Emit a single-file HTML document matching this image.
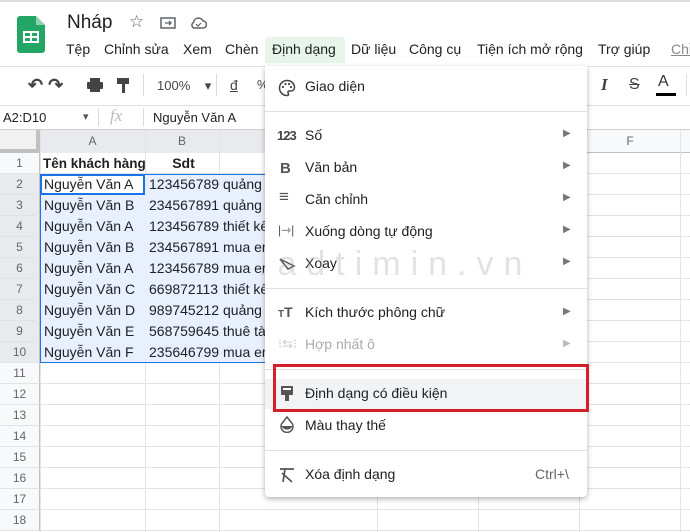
<!DOCTYPE html>
<html><head><meta charset="utf-8"><style>
*{margin:0;padding:0;box-sizing:border-box}
body{width:690px;height:532px;overflow:hidden;background:#fff;font-family:"Liberation Sans",Arial,sans-serif;position:relative;color:#202124}
.a{position:absolute;white-space:nowrap}
.menu span{position:absolute}
.hl{position:absolute;left:0;height:21px;width:40px;background:#f8f9fa;border-bottom:1px solid #e2e3e3;border-right:1px solid #c0c0c0;font-size:12px;color:#666;text-align:center;line-height:21px}
.cell{position:absolute;height:21px;font-size:14px;line-height:21px;padding-left:3px}
</style></head><body>
<div class="a" style="left:0;top:0;width:690px;height:2px;background:#ddd"></div>
<svg class="a" style="left:17px;top:16px" width="28" height="37" viewBox="0 0 28 37"><path d="M3 0H19L28 9V34a3 3 0 0 1-3 3H3a3 3 0 0 1-3-3V3a3 3 0 0 1 3-3z" fill="#23a566"/><path d="M19 0V9H28z" fill="#8ed1b1"/><rect x="6" y="15" width="16" height="12" fill="#fff"/><rect x="8" y="17" width="5" height="3" fill="#23a566"/><rect x="15" y="17" width="5" height="3" fill="#23a566"/><rect x="8" y="22" width="5" height="3" fill="#23a566"/><rect x="15" y="22" width="5" height="3" fill="#23a566"/></svg>
<div class="a" style="left:67px;top:12px;font-size:19px;color:#202124">Nháp</div>
<div class="a" style="left:129px;top:12px;font-size:17px;color:#5f6368">☆</div>
<svg class="a" style="left:160px;top:16px" width="16" height="13"><rect x="1" y="2" width="14" height="10" fill="none" stroke="#5f6368" stroke-width="1.5"/><path d="M5 7h6M9 5l2 2-2 2" stroke="#5f6368" fill="none" stroke-width="1.3"/></svg>
<svg class="a" style="left:189px;top:16px" width="18" height="13"><path d="M5 12h9a3.5 3.5 0 0 0 0-7 5 5 0 0 0-9.5 1.5A3 3 0 0 0 5 12z" fill="none" stroke="#5f6368" stroke-width="1.5"/><path d="M7 8l2 2 3-3" stroke="#5f6368" fill="none" stroke-width="1.2"/></svg>
<div class="a" style="top:41px;font-size:14px;color:#202124;left:66px">Tệp</div>
<div class="a" style="top:41px;font-size:14px;left:104px">Chỉnh sửa</div>
<div class="a" style="top:41px;font-size:14px;left:183px">Xem</div>
<div class="a" style="top:37px;left:265px;width:80px;height:26px;background:#e6f4ea;border-radius:4px 4px 0 0"></div>
<div class="a" style="top:41px;font-size:14px;left:225px">Chèn</div>
<div class="a" style="top:41px;font-size:14px;left:272px">Định dạng</div>
<div class="a" style="top:41px;font-size:14px;left:351px">Dữ liệu</div>
<div class="a" style="top:41px;font-size:14px;left:409px">Công cụ</div>
<div class="a" style="top:41px;font-size:14px;left:477px">Tiện ích mở rộng</div>
<div class="a" style="top:41px;font-size:14px;left:598px">Trợ giúp</div>
<div class="a" style="top:41px;font-size:14px;left:671px;color:#888;text-decoration:underline">Chỉ</div>
<div class="a" style="left:0;top:66px;width:690px;height:1px;background:#e0e0e0"></div>
<div class="a" style="left:28px;top:75px;font-size:18px;color:#444;font-weight:bold">↶ ↷</div>
<svg class="a" style="left:86px;top:77px" width="18" height="16"><rect x="4" y="1" width="10" height="4" fill="#444"/><rect x="1" y="5" width="16" height="7" rx="1" fill="#444"/><rect x="4" y="10" width="10" height="5" fill="#444"/></svg>
<svg class="a" style="left:116px;top:77px" width="14" height="17"><rect x="1" y="1" width="12" height="6" fill="#444"/><rect x="6" y="7" width="3" height="9" fill="#444"/></svg>
<div class="a" style="left:143px;top:74px;width:1px;height:22px;background:#ddd"></div>
<div class="a" style="left:157px;top:78px;font-size:13px;color:#444">100%&nbsp;&nbsp;&nbsp;&nbsp;▾</div>
<div class="a" style="left:216px;top:74px;width:1px;height:22px;background:#ddd"></div>
<div class="a" style="left:230px;top:77px;font-size:14px;color:#444;text-decoration:underline">đ</div>
<div class="a" style="left:257px;top:77px;font-size:13px;color:#444">%</div>
<div class="a" style="left:601px;top:75px;font-size:17px;color:#444;font-style:italic;font-family:'Liberation Serif',serif;font-weight:bold">I</div>
<div class="a" style="left:629px;top:76px;font-size:16px;color:#444;text-decoration:line-through">S</div>
<div class="a" style="left:658px;top:73px;font-size:16px;color:#333">A</div>
<div class="a" style="left:656px;top:93px;width:20px;height:3px;background:#000"></div>
<div class="a" style="left:686px;top:74px;width:1px;height:22px;background:#ddd"></div>
<div class="a" style="left:0;top:105px;width:690px;height:1px;background:#e0e0e0"></div>
<div class="a" style="left:3px;top:110px;font-size:13px">A2:D10</div>
<div class="a" style="left:83px;top:110px;font-size:11px;color:#555">▾</div>
<div class="a" style="left:98px;top:108px;width:1px;height:18px;background:#ddd"></div>
<div class="a" style="left:110px;top:106px;font-size:17px;color:#bbb;font-style:italic;font-family:'Liberation Serif',serif">fx</div>
<div class="a" style="left:143px;top:108px;width:1px;height:18px;background:#ddd"></div>
<div class="a" style="left:153px;top:110px;font-size:13px">Nguyễn Văn A</div>
<div class="a" style="left:0;top:129px;width:690px;height:1px;background:#d0d0d0"></div>
<div class="a" style="left:0;top:130px;width:690px;height:23px;background:#f8f9fa;border-bottom:1px solid #c0c0c0"></div>
<div class="a" style="left:0;top:130px;width:40px;height:23px;background:#f1f1f1;border-right:4px solid #c0c0c0;border-bottom:4px solid #c0c0c0"></div>
<div class="a" style="left:40px;top:130px;width:105px;height:23px;font-size:12px;color:#666;text-align:center;line-height:23px;background:#e8eaed">A</div>
<div class="a" style="left:145px;top:130px;width:74px;height:23px;font-size:12px;color:#666;text-align:center;line-height:23px;background:#e8eaed">B</div>
<div class="a" style="left:219px;top:130px;width:60px;height:23px;background:#e8eaed"></div>
<div class="a" style="left:580px;top:130px;width:100px;height:23px;font-size:12px;color:#666;text-align:center;line-height:23px">F</div>
<div id="g"></div>
<div class="a" style="left:40px;top:174px;width:240px;height:189px;background:#e8f0fe"></div>
<div class="a" style="left:40px;top:174px;width:105px;height:21px;background:#fff;border:2px solid #1a73e8"></div>
<div class="a" style="left:40px;top:174px;width:240px;height:189px;border:1px solid #1a73e8;border-right:none"></div>
<script>
var h='';
for(var i=0;i<18;i++){var t=153+i*21;
h+='<div class="hl" style="top:'+t+'px;'+(i>=1&&i<=9?'background:#e8eaed':'')+'">'+(i+1)+'</div>';
h+='<div class="a" style="left:40px;top:'+(t+20)+'px;width:650px;height:1px;background:#e2e3e3"></div>';}
[40,145,219,377,478,579,680].forEach(function(x){h+='<div class="a" style="left:'+x+'px;top:130px;width:1px;height:402px;background:#e2e3e3"></div>'});
document.getElementById('g').innerHTML=h;
var A=['Nguyễn Văn A','Nguyễn Văn B','Nguyễn Văn A','Nguyễn Văn B','Nguyễn Văn A','Nguyễn Văn C','Nguyễn Văn D','Nguyễn Văn E','Nguyễn Văn F'];
var B=['123456789','234567891','123456789','234567891','123456789','669872113','989745212','568759645','235646799'];
var C=['quảng cáo','quảng cáo','thiết kế','mua em','mua em','thiết kế','quảng cáo','thuê tài','mua em'];
var s='<div class="cell" style="left:40px;top:153px;font-weight:bold;font-size:13.5px">Tên khách hàng</div><div class="cell" style="left:145px;top:153px;width:74px;text-align:center;font-weight:bold">Sdt</div>';
for(var i=0;i<9;i++){var t=174+i*21;
s+='<div class="cell" style="left:41px;top:'+t+'px">'+A[i]+'</div><div class="cell" style="left:146px;top:'+t+'px">'+B[i]+'</div><div class="cell" style="left:220px;top:'+t+'px">'+C[i]+'</div>';}
document.write(s);
</script>
<div class="a menu" style="left:265px;top:66px;width:322px;height:431px;background:#fff;box-shadow:0 2px 6px rgba(0,0,0,.3);border-radius:0 0 4px 4px;font-size:14px;color:#202124">
<svg style="position:absolute;left:13px;top:13px" width="18" height="18" viewBox="0 0 18 18"><path d="M9 1.5a7.5 7.5 0 0 0 0 15c1 0 1.5-.7 1.5-1.4 0-.9-.6-1.2-.6-1.9 0-.8.6-1.2 1.4-1.2H13a3.5 3.5 0 0 0 3.5-3.5C16.5 4.6 13.2 1.5 9 1.5z" fill="none" stroke="#444" stroke-width="1.5"/><circle cx="5" cy="8" r="1.1" fill="#444"/><circle cx="7.5" cy="5" r="1.1" fill="#444"/><circle cx="11" cy="5" r="1.1" fill="#444"/><circle cx="13" cy="8" r="1.1" fill="#444"/></svg>
<span style="left:40px;top:12px">Giao diện</span>
<div style="position:absolute;left:0;top:45px;width:322px;height:1px;background:#e0e0e0"></div>
<span style="left:12px;top:62px;font-weight:bold;font-size:13px;color:#444;letter-spacing:-1px">123</span><span style="left:40px;top:61px">Số</span><span style="left:298px;top:62px;font-size:10px;color:#777">▶</span>
<span style="left:15px;top:94px;font-weight:bold;font-size:15px;color:#555">B</span><span style="left:40px;top:93px">Văn bản</span><span style="left:298px;top:94px;font-size:10px;color:#777">▶</span>
<span style="left:14px;top:121px;font-size:17px;color:#555">≡</span><span style="left:40px;top:125px">Căn chỉnh</span><span style="left:298px;top:126px;font-size:10px;color:#777">▶</span>
<span style="left:13px;top:157px;font-size:12px;color:#555">|⇾|</span><span style="left:40px;top:157px">Xuống dòng tự động</span><span style="left:298px;top:158px;font-size:10px;color:#777">▶</span>
<svg style="position:absolute;left:13px;top:191px" width="18" height="14"><path d="M2 2L10 12L16 9Z" fill="none" stroke="#555" stroke-width="1.5"/></svg><span style="left:40px;top:189px">Xoay</span><span style="left:298px;top:190px;font-size:10px;color:#777">▶</span>
<div style="position:absolute;left:0;top:222px;width:322px;height:1px;background:#e0e0e0"></div>
<span style="left:13px;top:238px;font-weight:bold;font-size:14px;color:#555"><small style="font-size:10px">T</small>T</span><span style="left:40px;top:238px">Kích thước phông chữ</span><span style="left:298px;top:240px;font-size:10px;color:#777">▶</span>
<span style="left:13px;top:270px;font-size:13px;color:#ccc">⁝⇆⁝</span><span style="left:40px;top:270px;color:#aaa">Hợp nhất ô</span><span style="left:298px;top:272px;font-size:10px;color:#bbb">▶</span>
<div style="position:absolute;left:0;top:303px;width:322px;height:1px;background:#e0e0e0"></div>
<div style="position:absolute;left:0;top:313px;width:322px;height:30px;background:#f1f3f4"></div>
<svg style="position:absolute;left:15px;top:319px" width="14" height="17"><rect x="1" y="1" width="12" height="9" rx="1" fill="#555"/><rect x="3" y="3" width="8" height="2" fill="#fff"/><rect x="5" y="10" width="4" height="6" fill="#555"/></svg>
<span style="left:40px;top:319px">Định dạng có điều kiện</span>
<svg style="position:absolute;left:14px;top:350px" width="16" height="17"><path d="M8 1L2.5 8A6 6 0 1 0 13.5 8Z" fill="none" stroke="#555" stroke-width="1.5"/><path d="M2.5 10h11A6 6 0 0 1 2.5 10z" fill="#555"/></svg>
<span style="left:40px;top:351px">Màu thay thế</span>
<div style="position:absolute;left:0;top:384px;width:322px;height:1px;background:#e0e0e0"></div>
<svg style="position:absolute;left:13px;top:401px" width="18" height="16"><path d="M2 2h14M7 2l-2 13M4 6l10 9" stroke="#555" fill="none" stroke-width="1.7"/></svg>
<span style="left:40px;top:400px">Xóa định dạng</span><span style="left:270px;top:400px;color:#666">Ctrl+\</span>
</div>
<div class="a" style="left:273px;top:364px;width:316px;height:48px;border:3px solid #d32027"></div>
<div class="a" style="left:258px;top:245px;font-size:34px;color:rgba(160,160,160,.3);letter-spacing:10px">.adtimin.vn</div>
</body></html>
